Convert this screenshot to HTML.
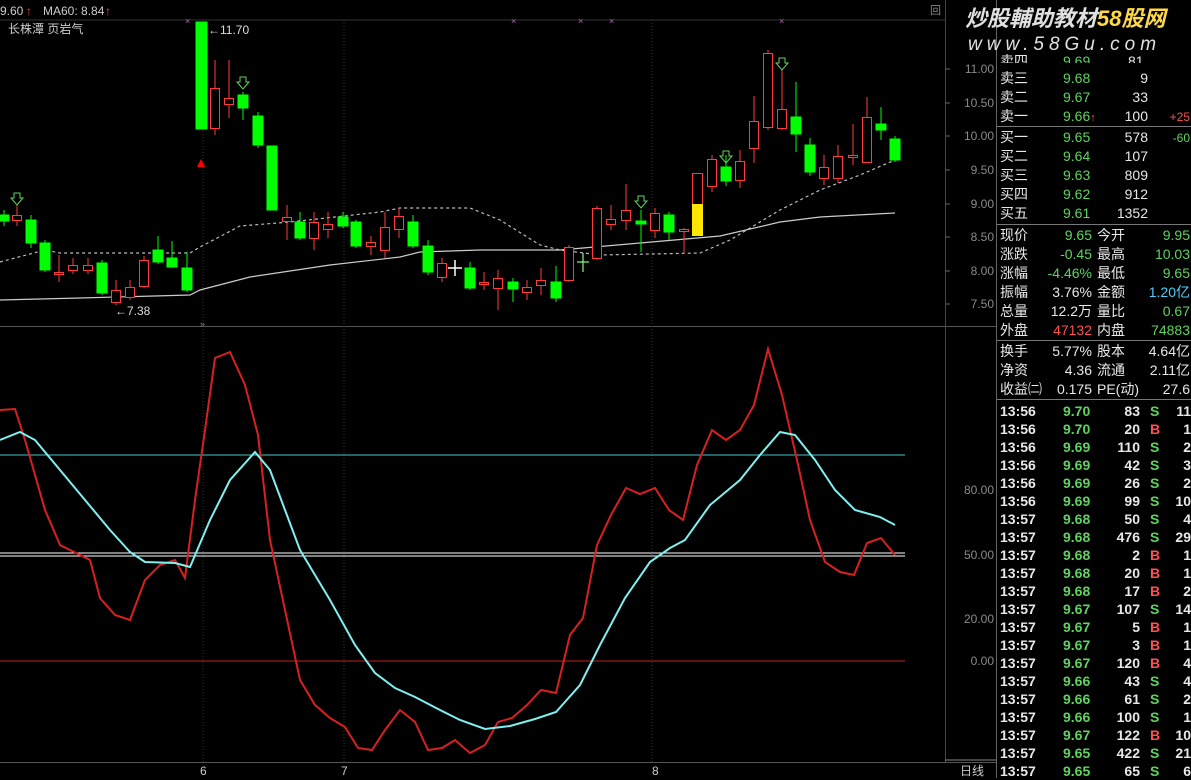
<!DOCTYPE html>
<html><head><meta charset="utf-8"><style>
*{margin:0;padding:0}
body{width:1191px;height:778px;background:#000;overflow:hidden;position:relative;font-family:"Liberation Sans","Noto Sans CJK SC",sans-serif;color:#ddd}
.t{position:absolute;font-size:14px;line-height:16px;white-space:nowrap}
.r{text-align:right}
.g{color:#5fd35f}.w{color:#e8e8e8}.rd{color:#ff5050}.c{color:#4fd0ff}
.row{height:18px;position:relative}
.row span{position:absolute;top:0;white-space:nowrap}
.ta{left:0;color:#e8e8e8}
.tp{left:63px;color:#5fd35f}
.tv{left:90px;width:50px;text-align:right;color:#e8e8e8}
.ts{left:150px;font-weight:bold}
.tn{left:160px;width:31px;text-align:right;color:#e8e8e8}
</style></head><body>
<svg width="1191" height="778" style="position:absolute;left:0;top:0" font-family="Liberation Sans, Noto Sans CJK SC, sans-serif">
<line x1="0" y1="20" x2="945" y2="20" stroke="#333"/>
<line x1="0" y1="326.5" x2="996" y2="326.5" stroke="#555"/>
<line x1="0" y1="762.5" x2="996" y2="762.5" stroke="#555"/>
<line x1="945.5" y1="0" x2="945.5" y2="762" stroke="#444"/>
<line x1="996.5" y1="0" x2="996.5" y2="778" stroke="#666"/>
<g stroke="#333" stroke-dasharray="1,2">
<line x1="203" y1="20" x2="203" y2="762"/><line x1="344" y1="20" x2="344" y2="762"/><line x1="652" y1="20" x2="652" y2="762"/>
</g>
<g stroke="#666"><line x1="945" y1="69" x2="950" y2="69"/><line x1="945" y1="103" x2="950" y2="103"/><line x1="945" y1="136" x2="950" y2="136"/><line x1="945" y1="170" x2="950" y2="170"/><line x1="945" y1="204" x2="950" y2="204"/><line x1="945" y1="237" x2="950" y2="237"/><line x1="945" y1="271" x2="950" y2="271"/><line x1="945" y1="304" x2="950" y2="304"/></g>
<g fill="#8a8a8a" font-size="12" text-anchor="end">
<text x="994" y="73">11.00</text><text x="994" y="107">10.50</text><text x="994" y="140">10.00</text><text x="994" y="174">9.50</text><text x="994" y="208">9.00</text><text x="994" y="241">8.50</text><text x="994" y="275">8.00</text><text x="994" y="308">7.50</text>
<text x="994" y="494">80.00</text><text x="994" y="559">50.00</text><text x="994" y="623">20.00</text><text x="994" y="665">0.00</text>
</g>
<text x="930" y="14" fill="#888" font-size="11">回</text>
<text x="0" y="15" fill="#ccc" font-size="12">9.60</text><text x="26" y="15" fill="#f44" font-size="12">↑</text>
<text x="43" y="15" fill="#ccc" font-size="12">MA60: 8.84</text><text x="105" y="15" fill="#f44" font-size="12">↑</text>
<text x="8" y="33" fill="#ccc" font-size="12">长株潭 页岩气</text>
<text x="208" y="34" fill="#ddd" font-size="12">←11.70</text>
<text x="115" y="315" fill="#ddd" font-size="12">←7.38</text>
<g fill="#c060c0" font-size="9"><text x="185" y="24">×</text><text x="511" y="24">×</text><text x="578" y="24">×</text><text x="609" y="24">×</text><text x="779" y="24">×</text></g>
<polyline fill="none" stroke="#bbb" stroke-width="1.2" stroke-dasharray="3,3" points="0,262 45,250 60,253 190,253 200,247 240,226 290,222 380,212 400,208 470,208 500,220 540,245 560,250 600,255 700,253 730,240 780,210 820,190 860,175 895,160"/>
<polyline fill="none" stroke="#ccc" stroke-width="1.2" points="0,300 80,298 190,295 200,290 250,277 330,265 400,257 420,252 480,250 560,250 640,243 720,236 780,222 820,217 895,213"/>
<g stroke-width="1">
<g stroke="#0f0" fill="#0f0">
<line x1="4" y1="210" x2="4" y2="226"/><rect x="-1" y="215" width="10" height="6"/>
<line x1="31" y1="215" x2="31" y2="248"/><rect x="26" y="220" width="10" height="23"/>
<line x1="45" y1="240" x2="45" y2="272"/><rect x="40" y="243" width="10" height="27"/>
<line x1="102" y1="260" x2="102" y2="295"/><rect x="97" y="263" width="10" height="30"/>
<line x1="158" y1="236" x2="158" y2="264"/><rect x="153" y="250" width="10" height="12"/>
<line x1="172" y1="241" x2="172" y2="268"/><rect x="167" y="258" width="10" height="9"/>
<line x1="187" y1="252" x2="187" y2="292"/><rect x="182" y="268" width="10" height="22"/>
<rect x="196" y="22" width="11" height="107"/>
<line x1="243" y1="92" x2="243" y2="120"/><rect x="238" y="95" width="10" height="13"/>
<line x1="258" y1="112" x2="258" y2="148"/><rect x="253" y="116" width="10" height="29"/>
<rect x="267" y="146" width="10" height="64"/>
<line x1="300" y1="212" x2="300" y2="240"/><rect x="295" y="222" width="10" height="16"/>
<line x1="343" y1="212" x2="343" y2="228"/><rect x="338" y="217" width="10" height="9"/>
<line x1="356" y1="220" x2="356" y2="248"/><rect x="351" y="222" width="10" height="24"/>
<line x1="413" y1="215" x2="413" y2="248"/><rect x="408" y="222" width="10" height="24"/>
<line x1="428" y1="240" x2="428" y2="275"/><rect x="423" y="246" width="10" height="26"/>
<line x1="470" y1="262" x2="470" y2="290"/><rect x="465" y="268" width="10" height="20"/>
<line x1="513" y1="278" x2="513" y2="302"/><rect x="508" y="282" width="10" height="7"/>
<line x1="556" y1="266" x2="556" y2="302"/><rect x="551" y="282" width="10" height="16"/>
<line x1="641" y1="210" x2="641" y2="252"/><rect x="636" y="221" width="10" height="3"/>
<line x1="669" y1="212" x2="669" y2="240"/><rect x="664" y="215" width="10" height="17"/>
<line x1="726" y1="155" x2="726" y2="186"/><rect x="721" y="167" width="10" height="14"/>
<line x1="796" y1="82" x2="796" y2="152"/><rect x="791" y="117" width="10" height="17"/>
<line x1="810" y1="138" x2="810" y2="176"/><rect x="805" y="145" width="10" height="27"/>
<line x1="881" y1="107" x2="881" y2="140"/><rect x="876" y="124" width="10" height="6"/>
<line x1="895" y1="136" x2="895" y2="162"/><rect x="890" y="139" width="10" height="21"/>
</g>
<g stroke="#ff3c3c" fill="#000">
<line x1="17" y1="205" x2="17" y2="226"/><rect x="12.5" y="215.5" width="9" height="5"/>
<line x1="59" y1="255" x2="59" y2="282"/><rect x="54.5" y="272.5" width="9" height="2"/>
<line x1="73" y1="258" x2="73" y2="274"/><rect x="68.5" y="265.5" width="9" height="5"/>
<line x1="88" y1="258" x2="88" y2="274"/><rect x="83.5" y="265.5" width="9" height="5"/>
<line x1="116" y1="280" x2="116" y2="305"/><rect x="111.5" y="290.5" width="9" height="12"/>
<line x1="130" y1="280" x2="130" y2="300"/><rect x="125.5" y="287.5" width="9" height="10"/>
<line x1="144" y1="256" x2="144" y2="288"/><rect x="139.5" y="260.5" width="9" height="26"/>
<line x1="215" y1="60" x2="215" y2="135"/><rect x="210.5" y="88.5" width="9" height="40"/>
<line x1="229" y1="60" x2="229" y2="118"/><rect x="224.5" y="98.5" width="9" height="6"/>
<line x1="287" y1="205" x2="287" y2="240"/><rect x="282.5" y="217.5" width="9" height="4"/>
<line x1="314" y1="212" x2="314" y2="250"/><rect x="309.5" y="222.5" width="9" height="16"/>
<line x1="328" y1="212" x2="328" y2="238"/><rect x="323.5" y="224.5" width="9" height="5"/>
<line x1="371" y1="236" x2="371" y2="255"/><rect x="366.5" y="242.5" width="9" height="4"/>
<line x1="385" y1="212" x2="385" y2="258"/><rect x="380.5" y="227.5" width="9" height="23"/>
<line x1="399" y1="208" x2="399" y2="238"/><rect x="394.5" y="216.5" width="9" height="13"/>
<line x1="442" y1="258" x2="442" y2="282"/><rect x="437.5" y="263.5" width="9" height="14"/>
<line x1="484" y1="272" x2="484" y2="290"/><rect x="479.5" y="282.5" width="9" height="2"/>
<line x1="498" y1="270" x2="498" y2="310"/><rect x="493.5" y="278.5" width="9" height="10"/>
<line x1="527" y1="280" x2="527" y2="300"/><rect x="522.5" y="287.5" width="9" height="5"/>
<line x1="541" y1="268" x2="541" y2="295"/><rect x="536.5" y="280.5" width="9" height="5"/>
<line x1="569" y1="245" x2="569" y2="282"/><rect x="564.5" y="247.5" width="9" height="33"/>
<line x1="597" y1="206" x2="597" y2="260"/><rect x="592.5" y="208.5" width="9" height="50"/>
<line x1="611" y1="205" x2="611" y2="230"/><rect x="606.5" y="219.5" width="9" height="5"/>
<line x1="626" y1="184" x2="626" y2="230"/><rect x="621.5" y="210.5" width="9" height="10"/>
<line x1="655" y1="208" x2="655" y2="238"/><rect x="650.5" y="213.5" width="9" height="17"/>
<line x1="684" y1="228" x2="684" y2="254"/><rect x="679.5" y="229.5" width="9" height="2"/>
<rect x="692.5" y="173.5" width="10" height="31"/>
<line x1="712" y1="155" x2="712" y2="192"/><rect x="707.5" y="159.5" width="9" height="27"/>
<line x1="740" y1="150" x2="740" y2="188"/><rect x="735.5" y="161.5" width="9" height="19"/>
<line x1="754" y1="96" x2="754" y2="163"/><rect x="749.5" y="121.5" width="9" height="27"/>
<line x1="768" y1="50" x2="768" y2="130"/><rect x="763.5" y="53.5" width="9" height="74"/>
<line x1="782" y1="70" x2="782" y2="130"/><rect x="777.5" y="109.5" width="9" height="19"/>
<line x1="824" y1="155" x2="824" y2="185"/><rect x="819.5" y="167.5" width="9" height="11"/>
<line x1="838" y1="145" x2="838" y2="183"/><rect x="833.5" y="156.5" width="9" height="22"/>
<line x1="853" y1="124" x2="853" y2="165"/><rect x="848.5" y="155.5" width="9" height="2"/>
<line x1="867" y1="97" x2="867" y2="163"/><rect x="862.5" y="117.5" width="9" height="45"/>
</g>
<rect x="692" y="204" width="11" height="32" fill="#ffe600"/>
<g stroke="#7fff7f" stroke-width="1.2"><line x1="583" y1="253" x2="583" y2="272"/><line x1="577" y1="262" x2="589" y2="262"/></g>
<g stroke="#fff" stroke-width="1.5"><line x1="455" y1="260" x2="455" y2="276"/><line x1="448" y1="268" x2="462" y2="268"/></g>
<polygon points="197,167 205,167 201,159" fill="#f00"/>
</g>
<g fill="none" stroke="#5fd35f" stroke-width="1">
<path d="M14,193h6v5h3l-6,7l-6,-7h3z"/><path d="M240,77h6v5h3l-6,7l-6,-7h3z"/><path d="M638,196h6v5h3l-6,7l-6,-7h3z"/><path d="M723,151h6v5h3l-6,7l-6,-7h3z"/><path d="M779,58h6v5h3l-6,7l-6,-7h3z"/>
</g>
<line x1="0" y1="455" x2="905" y2="455" stroke="#40c8c8"/>
<line x1="0" y1="553" x2="905" y2="553" stroke="#fff"/>
<line x1="0" y1="556" x2="905" y2="556" stroke="#fff"/>
<line x1="0" y1="661" x2="905" y2="661" stroke="#c02020"/>
<polyline fill="none" stroke="#d82020" stroke-width="2" points="0,410 15,409 25,440 45,510 60,545 80,555 90,560 100,598 115,615 130,620 145,580 160,565 175,560 185,578 195,500 205,430 215,358 230,352 245,385 258,435 270,540 285,610 300,680 315,705 330,718 345,727 358,748 372,750 385,730 400,710 415,722 428,750 442,748 455,740 470,753 485,745 498,722 512,718 527,705 541,690 556,693 570,635 583,618 597,545 611,515 626,488 640,494 655,488 669,510 683,520 697,465 712,430 726,440 740,430 754,405 768,349 782,395 797,460 810,520 825,562 840,572 854,575 867,543 881,538 895,555"/>
<polyline fill="none" stroke="#7ff0f0" stroke-width="2" points="0,440 20,432 35,440 60,470 85,500 110,530 130,552 145,562 175,563 190,567 210,520 230,480 255,452 270,470 285,510 300,550 330,600 355,645 375,673 395,688 415,697 440,710 460,720 485,729 510,726 535,719 556,712 580,685 600,645 625,598 650,562 670,548 685,540 710,505 740,480 760,455 780,432 795,435 815,460 835,490 855,510 880,517 895,525"/>
<text x="200" y="327" fill="#888" font-size="9">»</text>
<g fill="#ccc" font-size="12"><text x="200" y="775">6</text><text x="341" y="775">7</text><text x="652" y="775">8</text><text x="960" y="775">日线</text></g>
<line x1="945" y1="760" x2="996" y2="760" stroke="#888"/>
<g stroke="#777"><line x1="997" y1="126.5" x2="1191" y2="126.5"/><line x1="997" y1="224.5" x2="1191" y2="224.5"/><line x1="997" y1="340.5" x2="1191" y2="340.5"/><line x1="997" y1="399.5" x2="1191" y2="399.5"/></g>
<text x="965" y="26" fill="#e0e0e0" font-size="22" font-style="italic" font-weight="bold">炒股輔助教材<tspan fill="#ffd84a">58股网</tspan></text>
<text x="968" y="50" fill="#e0e0e0" font-size="19" font-style="italic" letter-spacing="5">www.58Gu.com</text>
</svg>
<div class="t w" style="left:1000px;top:53px;height:10px;overflow:hidden">卖四</div>
<div class="t g" style="left:1063px;top:53px;height:10px;overflow:hidden">9.69</div>
<div class="t w" style="left:1128px;top:53px;height:10px;overflow:hidden">81</div>
<div class="t w" style="left:1000px;top:70px">卖三</div><div class="t g" style="left:1063px;top:70px">9.68</div><div class="t w r" style="left:1100px;top:70px;width:48px">9</div>
<div class="t w" style="left:1000px;top:89px">卖二</div><div class="t g" style="left:1063px;top:89px">9.67</div><div class="t w r" style="left:1100px;top:89px;width:48px">33</div>
<div class="t w" style="left:1000px;top:108px">卖一</div><div class="t g" style="left:1063px;top:108px">9.66<span class="rd" style="font-size:11px">↑</span></div><div class="t w r" style="left:1100px;top:108px;width:48px">100</div><div class="t rd r" style="left:1150px;top:109px;width:40px;font-size:12px">+25</div>
<div class="t w" style="left:1000px;top:129px">买一</div><div class="t g" style="left:1063px;top:129px">9.65</div><div class="t w r" style="left:1100px;top:129px;width:48px">578</div><div class="t g r" style="left:1150px;top:130px;width:40px;font-size:12px">-60</div>
<div class="t w" style="left:1000px;top:148px">买二</div><div class="t g" style="left:1063px;top:148px">9.64</div><div class="t w r" style="left:1100px;top:148px;width:48px">107</div>
<div class="t w" style="left:1000px;top:167px">买三</div><div class="t g" style="left:1063px;top:167px">9.63</div><div class="t w r" style="left:1100px;top:167px;width:48px">809</div>
<div class="t w" style="left:1000px;top:186px">买四</div><div class="t g" style="left:1063px;top:186px">9.62</div><div class="t w r" style="left:1100px;top:186px;width:48px">912</div>
<div class="t w" style="left:1000px;top:205px">买五</div><div class="t g" style="left:1063px;top:205px">9.61</div><div class="t w r" style="left:1100px;top:205px;width:48px">1352</div>

<div class="t w" style="left:1000px;top:227px">现价</div><div class="t g r" style="left:1040px;top:227px;width:52px">9.65</div><div class="t w" style="left:1097px;top:227px">今开</div><div class="t g r" style="left:1140px;top:227px;width:50px">9.95</div>
<div class="t w" style="left:1000px;top:246px">涨跌</div><div class="t g r" style="left:1040px;top:246px;width:52px">-0.45</div><div class="t w" style="left:1097px;top:246px">最高</div><div class="t g r" style="left:1140px;top:246px;width:50px">10.03</div>
<div class="t w" style="left:1000px;top:265px">涨幅</div><div class="t g r" style="left:1040px;top:265px;width:52px">-4.46%</div><div class="t w" style="left:1097px;top:265px">最低</div><div class="t g r" style="left:1140px;top:265px;width:50px">9.65</div>
<div class="t w" style="left:1000px;top:284px">振幅</div><div class="t w r" style="left:1040px;top:284px;width:52px">3.76%</div><div class="t w" style="left:1097px;top:284px">金额</div><div class="t c r" style="left:1140px;top:284px;width:50px">1.20亿</div>
<div class="t w" style="left:1000px;top:303px">总量</div><div class="t w r" style="left:1040px;top:303px;width:52px">12.2万</div><div class="t w" style="left:1097px;top:303px">量比</div><div class="t g r" style="left:1140px;top:303px;width:50px">0.67</div>
<div class="t w" style="left:1000px;top:322px">外盘</div><div class="t rd r" style="left:1040px;top:322px;width:52px">47132</div><div class="t w" style="left:1097px;top:322px">内盘</div><div class="t g r" style="left:1140px;top:322px;width:50px">74883</div>
<div class="t w" style="left:1000px;top:343px">换手</div><div class="t w r" style="left:1040px;top:343px;width:52px">5.77%</div><div class="t w" style="left:1097px;top:343px">股本</div><div class="t w r" style="left:1140px;top:343px;width:50px">4.64亿</div>
<div class="t w" style="left:1000px;top:362px">净资</div><div class="t w r" style="left:1040px;top:362px;width:52px">4.36</div><div class="t w" style="left:1097px;top:362px">流通</div><div class="t w r" style="left:1140px;top:362px;width:50px">2.11亿</div>
<div class="t w" style="left:1000px;top:381px">收益㈡</div><div class="t w r" style="left:1040px;top:381px;width:52px">0.175</div><div class="t w" style="left:1097px;top:381px">PE(动)</div><div class="t w r" style="left:1140px;top:381px;width:50px">27.6</div>

<div style="position:absolute;left:1000px;top:402px;width:191px;font-size:14px;line-height:18px;font-weight:bold">
<div class="row"><span class="ta">13:56</span><span class="tp">9.70</span><span class="tv">83</span><span class="ts g">S</span><span class="tn">11</span></div>
<div class="row"><span class="ta">13:56</span><span class="tp">9.70</span><span class="tv">20</span><span class="ts rd">B</span><span class="tn">1</span></div>
<div class="row"><span class="ta">13:56</span><span class="tp">9.69</span><span class="tv">110</span><span class="ts g">S</span><span class="tn">2</span></div>
<div class="row"><span class="ta">13:56</span><span class="tp">9.69</span><span class="tv">42</span><span class="ts g">S</span><span class="tn">3</span></div>
<div class="row"><span class="ta">13:56</span><span class="tp">9.69</span><span class="tv">26</span><span class="ts g">S</span><span class="tn">2</span></div>
<div class="row"><span class="ta">13:56</span><span class="tp">9.69</span><span class="tv">99</span><span class="ts g">S</span><span class="tn">10</span></div>
<div class="row"><span class="ta">13:57</span><span class="tp">9.68</span><span class="tv">50</span><span class="ts g">S</span><span class="tn">4</span></div>
<div class="row"><span class="ta">13:57</span><span class="tp">9.68</span><span class="tv">476</span><span class="ts g">S</span><span class="tn">29</span></div>
<div class="row"><span class="ta">13:57</span><span class="tp">9.68</span><span class="tv">2</span><span class="ts rd">B</span><span class="tn">1</span></div>
<div class="row"><span class="ta">13:57</span><span class="tp">9.68</span><span class="tv">20</span><span class="ts rd">B</span><span class="tn">1</span></div>
<div class="row"><span class="ta">13:57</span><span class="tp">9.68</span><span class="tv">17</span><span class="ts rd">B</span><span class="tn">2</span></div>
<div class="row"><span class="ta">13:57</span><span class="tp">9.67</span><span class="tv">107</span><span class="ts g">S</span><span class="tn">14</span></div>
<div class="row"><span class="ta">13:57</span><span class="tp">9.67</span><span class="tv">5</span><span class="ts rd">B</span><span class="tn">1</span></div>
<div class="row"><span class="ta">13:57</span><span class="tp">9.67</span><span class="tv">3</span><span class="ts rd">B</span><span class="tn">1</span></div>
<div class="row"><span class="ta">13:57</span><span class="tp">9.67</span><span class="tv">120</span><span class="ts rd">B</span><span class="tn">4</span></div>
<div class="row"><span class="ta">13:57</span><span class="tp">9.66</span><span class="tv">43</span><span class="ts g">S</span><span class="tn">4</span></div>
<div class="row"><span class="ta">13:57</span><span class="tp">9.66</span><span class="tv">61</span><span class="ts g">S</span><span class="tn">2</span></div>
<div class="row"><span class="ta">13:57</span><span class="tp">9.66</span><span class="tv">100</span><span class="ts g">S</span><span class="tn">1</span></div>
<div class="row"><span class="ta">13:57</span><span class="tp">9.67</span><span class="tv">122</span><span class="ts rd">B</span><span class="tn">10</span></div>
<div class="row"><span class="ta">13:57</span><span class="tp">9.65</span><span class="tv">422</span><span class="ts g">S</span><span class="tn">21</span></div>
<div class="row"><span class="ta">13:57</span><span class="tp">9.65</span><span class="tv">65</span><span class="ts g">S</span><span class="tn">6</span></div>
</div>
</body></html>
